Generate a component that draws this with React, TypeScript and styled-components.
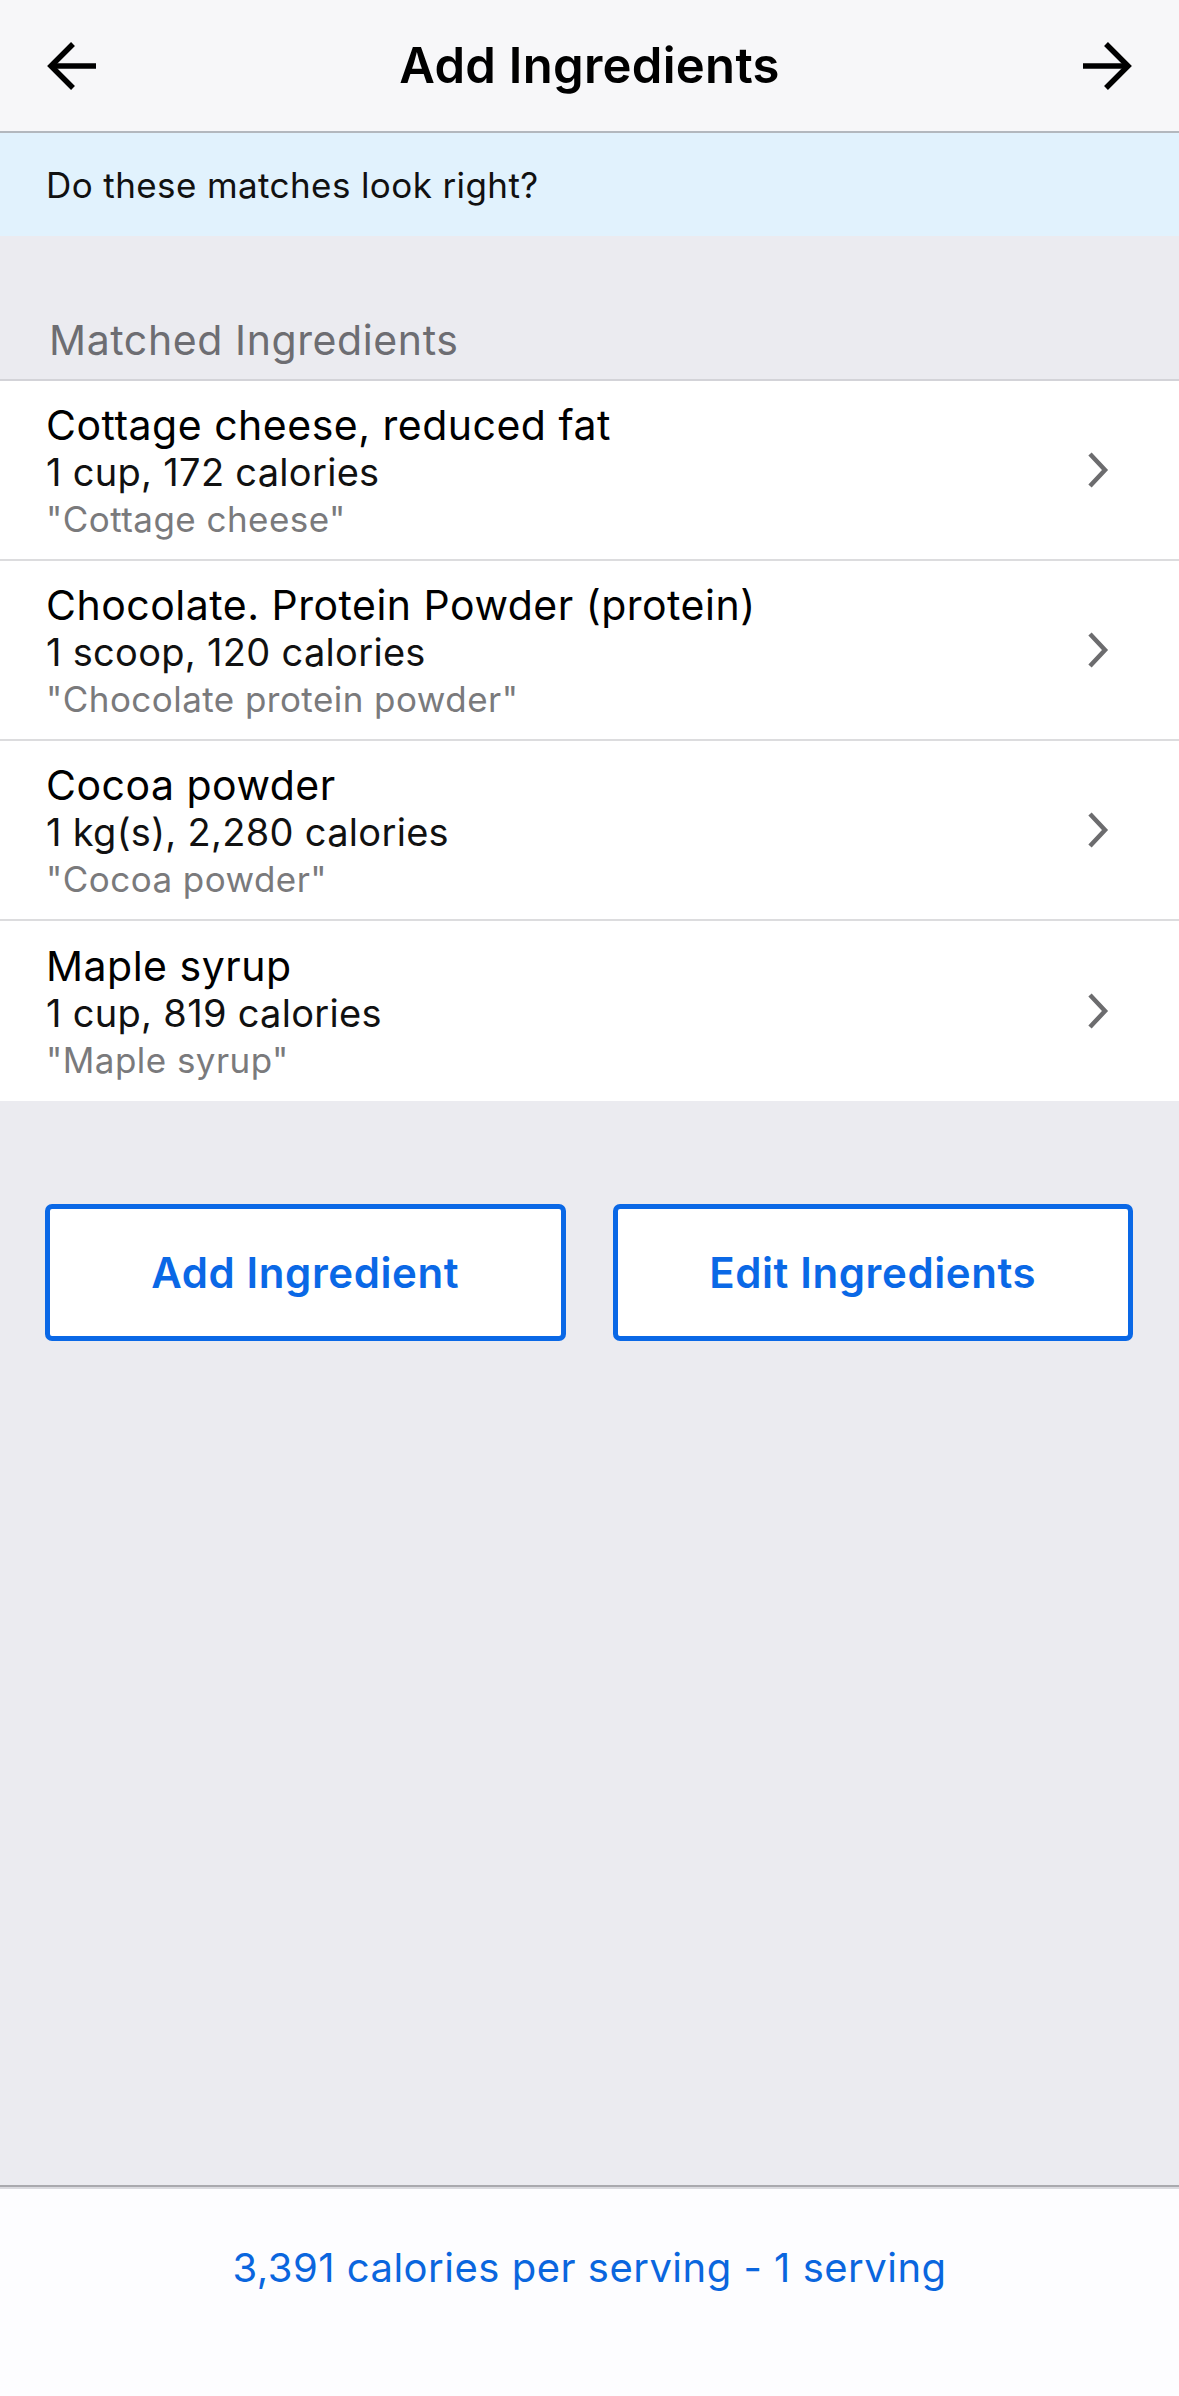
import React from "react";
import styled, { createGlobalStyle } from "styled-components";

const GlobalStyle = createGlobalStyle`
  html, body {
    margin: 0;
    padding: 0;
    background: #ebebf0;
    font-family: Inter, "Liberation Sans", Arial, sans-serif;
    -webkit-font-smoothing: antialiased;
  }
  * { box-sizing: border-box; }
`;

const Page = styled.div`
  min-height: 2396px;
  display: flex;
  flex-direction: column;
  background: #ebebf0;
`;

const Header = styled.header`
  height: 133px;
  background: #f7f7f9;
  border-bottom: 2px solid #b3b8be;
  display: grid;
  grid-template-columns: 52px 1fr 52px;
  align-items: center;
  padding: 0 46px;
`;

const IconButton = styled.button`
  width: 52px;
  height: 52px;
  padding: 0;
  border: none;
  background: none;
  display: flex;
  align-items: center;
  justify-content: center;
`;

const Title = styled.h1`
  margin: 0;
  text-align: center;
  font-size: 49px;
  font-weight: 600;
  color: #000;
  letter-spacing: 0.3px;
`;

const Banner = styled.div`
  height: 103px;
  background: #e1f2fd;
  display: flex;
  align-items: center;
  padding-left: 46px;
  font-size: 35px;
  letter-spacing: 0.4px;
  color: #111;
`;

const SectionHeader = styled.div`
  height: 143px;
  display: flex;
  align-items: flex-end;
  padding: 0 0 14px 49px;
  font-size: 41px;
  line-height: 50px;
  letter-spacing: 0.6px;
  color: #6d6d72;
`;

const List = styled.div`
  background: #fff;
  border-top: 2px solid #d3d3d8;
`;

const Row = styled.div<{ $last?: boolean }>`
  height: 180px;
  display: flex;
  align-items: center;
  padding: 0 68px 0 46px;
  border-bottom: ${(p) => (p.$last ? "none" : "2px solid #dcdcde")};
`;

const RowText = styled.div`
  flex: 1;
  display: flex;
  flex-direction: column;
  padding-top: 2px;
`;

const RowTitle = styled.div`
  font-size: 41px;
  line-height: 48px;
  letter-spacing: 0.5px;
  color: #000;
`;

const RowDetail = styled.div`
  font-size: 38px;
  line-height: 47px;
  letter-spacing: 0.3px;
  color: #111;
`;

const RowQuery = styled.div`
  font-size: 35px;
  line-height: 46px;
  letter-spacing: 0.45px;
  color: #7a7a7c;
`;

const ButtonRow = styled.div`
  display: grid;
  grid-template-columns: 1fr 1fr;
  gap: 47px;
  padding: 103px 46px 0 45px;
`;

const OutlineButton = styled.button`
  height: 137px;
  background: #fff;
  border: 5px solid #0a68e6;
  border-radius: 7px;
  color: #0a68e6;
  font-family: Inter, "Liberation Sans", Arial, sans-serif;
  font-size: 42px;
  font-weight: 600;
  letter-spacing: 0.6px;
`;

const Filler = styled.div`
  flex: 1;
`;

const Footer = styled.footer`
  height: 211px;
  background: #fdfdff;
  border-top: 2px solid #a9a9ae;
  box-shadow: inset 0 2px 0 #dadadf;
  display: flex;
  justify-content: center;
  padding-top: 56px;
  font-size: 40px;
  letter-spacing: 0.5px;
  color: #0a66de;
`;

const BackArrow = () => (
  <svg width="52" height="52" viewBox="0 0 52 52" fill="none">
    <path d="M27 4 L5 26 L27 48" stroke="#000" strokeWidth="5.5" strokeLinejoin="miter" />
    <path d="M6 26 H50" stroke="#000" strokeWidth="5.5" />
  </svg>
);

const ForwardArrow = () => (
  <svg width="52" height="52" viewBox="0 0 52 52" fill="none">
    <path d="M25 4 L47 26 L25 48" stroke="#000" strokeWidth="5.5" strokeLinejoin="miter" />
    <path d="M2 26 H46" stroke="#000" strokeWidth="5.5" />
  </svg>
);

const Chevron = () => (
  <svg width="26" height="40" viewBox="0 0 26 40" fill="none">
    <path d="M5 4 L20 20 L5 36" stroke="#6c6c6e" strokeWidth="4.5" />
  </svg>
);

const ingredients = [
  { name: "Cottage cheese, reduced fat", detail: "1 cup, 172 calories", query: "Cottage cheese" },
  { name: "Chocolate. Protein Powder (protein)", detail: "1 scoop, 120 calories", query: "Chocolate protein powder" },
  { name: "Cocoa powder", detail: "1 kg(s), 2,280 calories", query: "Cocoa powder" },
  { name: "Maple syrup", detail: "1 cup, 819 calories", query: "Maple syrup" },
];

export default function App() {
  return (
    <>
      <GlobalStyle />
      <Page>
        <Header>
          <IconButton aria-label="Back">
            <BackArrow />
          </IconButton>
          <Title>Add Ingredients</Title>
          <IconButton aria-label="Next">
            <ForwardArrow />
          </IconButton>
        </Header>
        <Banner>Do these matches look right?</Banner>
        <SectionHeader>Matched Ingredients</SectionHeader>
        <List>
          {ingredients.map((item, i) => (
            <Row key={item.name} $last={i === ingredients.length - 1}>
              <RowText>
                <RowTitle>{item.name}</RowTitle>
                <RowDetail>{item.detail}</RowDetail>
                <RowQuery>"{item.query}"</RowQuery>
              </RowText>
              <Chevron />
            </Row>
          ))}
        </List>
        <ButtonRow>
          <OutlineButton>Add Ingredient</OutlineButton>
          <OutlineButton>Edit Ingredients</OutlineButton>
        </ButtonRow>
        <Filler />
        <Footer>3,391 calories per serving - 1 serving</Footer>
      </Page>
    </>
  );
}
